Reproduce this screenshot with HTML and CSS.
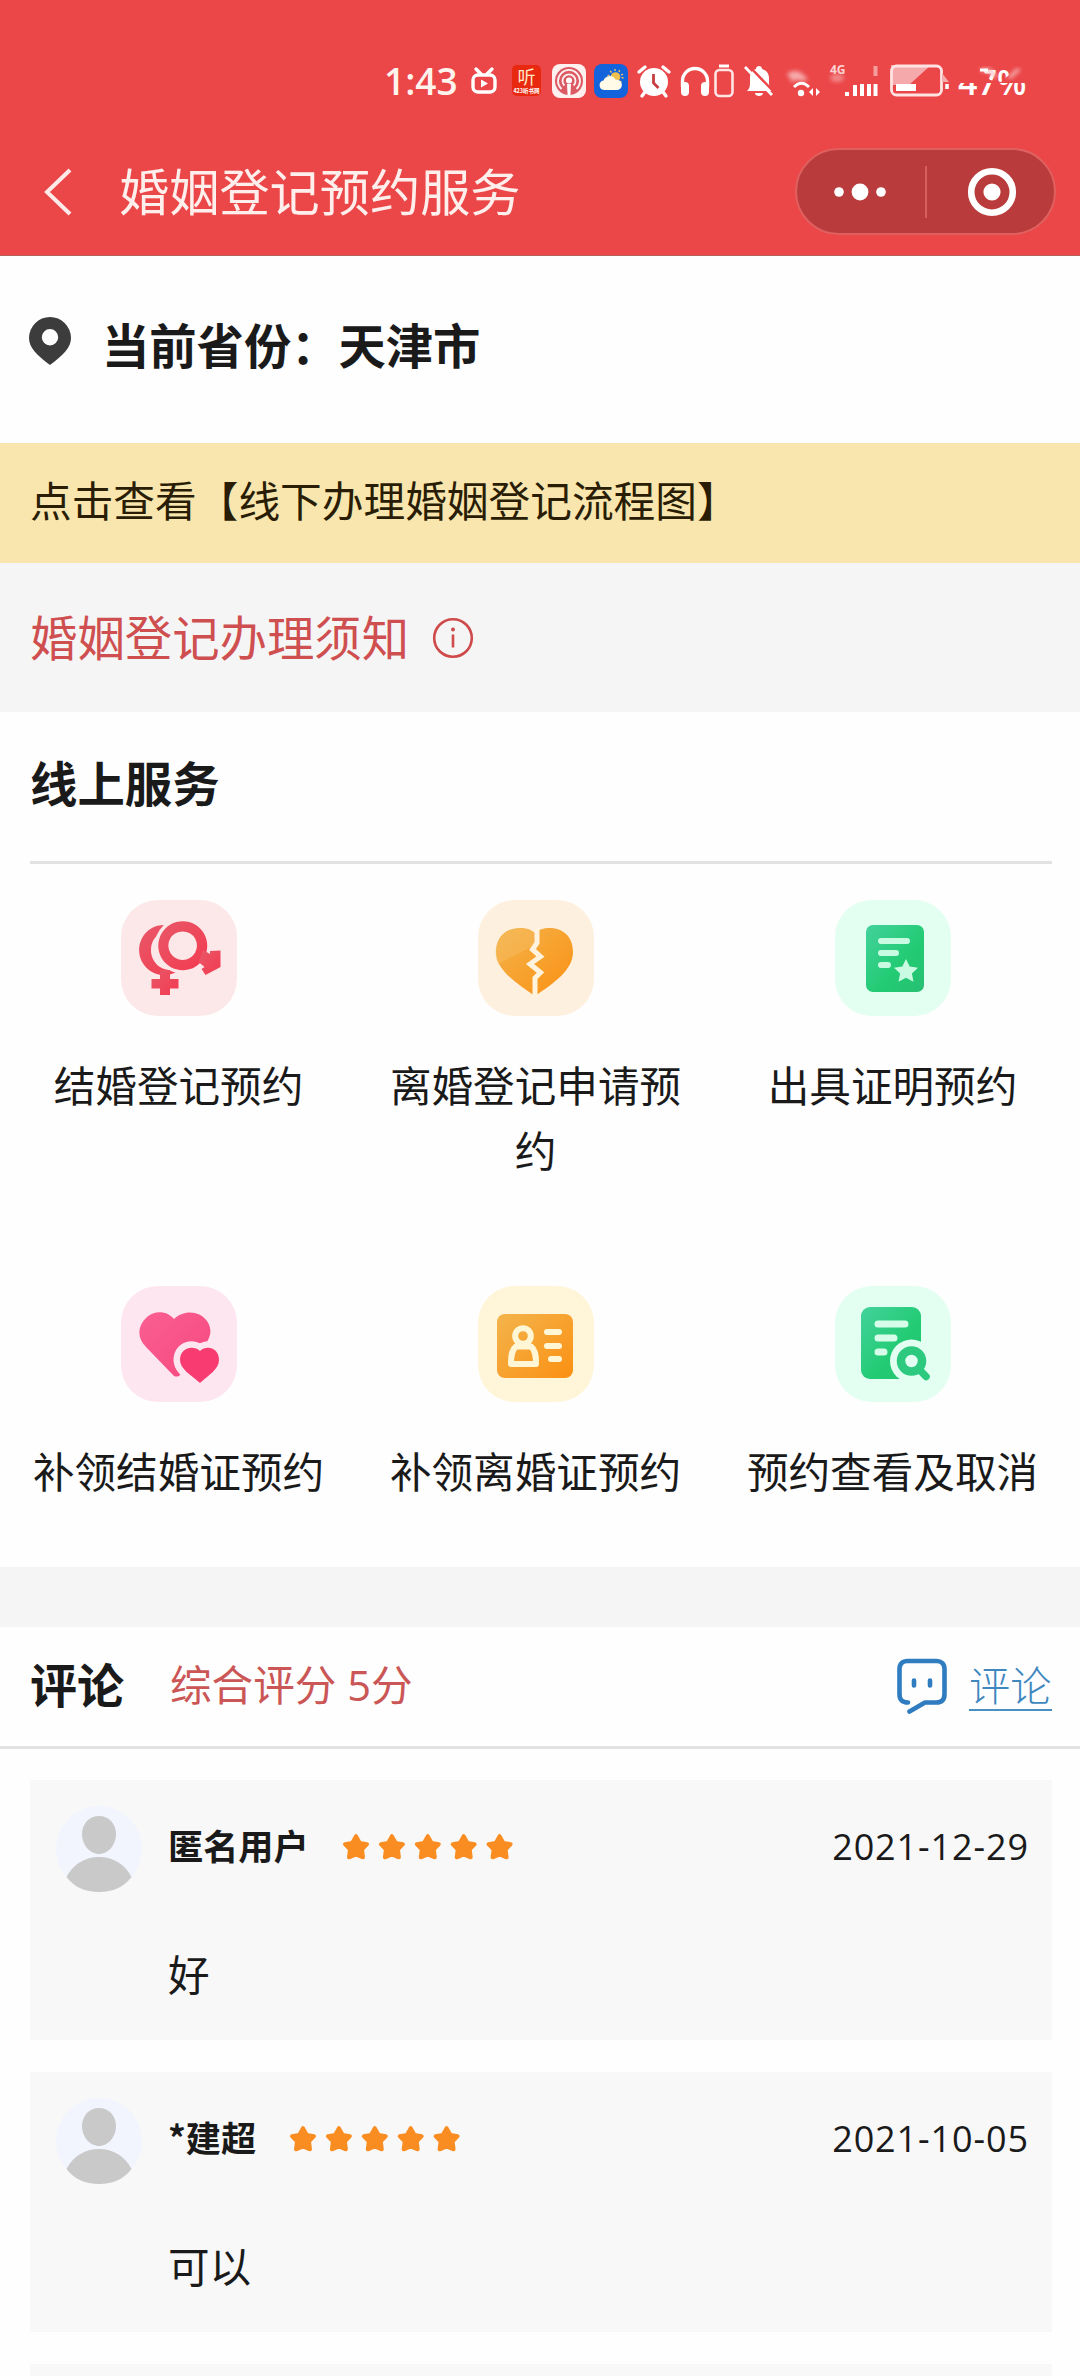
FILE: index.html
```html
<!DOCTYPE html>
<html lang="zh-CN">
<head>
<meta charset="utf-8">
<title>婚姻登记预约服务</title>
<link rel="stylesheet" href="styles.css">
</head>
<body>
<svg class="defs" width="0" height="0" aria-hidden="true">
  <defs>
    <linearGradient id="gRed" x1="0" y1="0" x2="1" y2="1"><stop offset="0" stop-color="#e85868"/><stop offset="1" stop-color="#f33a50"/></linearGradient>
    <linearGradient id="gOrange" x1="0" y1="0" x2="1" y2="1"><stop offset="0" stop-color="#f3b44c"/><stop offset="1" stop-color="#fb9012"/></linearGradient>
    <linearGradient id="gGreen" x1="0" y1="0" x2="1" y2="1"><stop offset="0" stop-color="#43d29c"/><stop offset=".6" stop-color="#22cb73"/><stop offset="1" stop-color="#27bf72"/></linearGradient>
    <linearGradient id="gPink" x1="0" y1="0" x2="1" y2="1"><stop offset="0" stop-color="#fa5f92"/><stop offset="1" stop-color="#f64880"/></linearGradient>
    <path id="star" d="M14 3.200 17.800 10 25 11.200 20 16.500 21 24.300 14 21.300 7 24.300 8 16.500 3 11.200 10.200 10Z" fill="#fa8d22" stroke="#fa8d22" stroke-width="4" stroke-linejoin="round"/>
    <g id="person">
      <circle cx="43" cy="43" r="43" fill="#f2f5fe"/>
      <path d="M43 10c10 0 17 8 17 18 0 11-8 20-17 20s-17-9-17-20c0-10 7-18 17-18Z" fill="#c9c9c9"/>
      <path d="M10.500 71C17 58 29 51 43 51s26 7 32.500 20C68 81 57 86 43 86S18 81 10.500 71Z" fill="#c9c9c9"/>
    </g>
  </defs>
</svg>

<header class="top">
  <div class="status">
    <span class="clock">1:43</span>
    <svg class="st-tv" width="26" height="28" viewBox="0 0 26 28" fill="none" stroke="#fff" stroke-width="3.400" stroke-linecap="round"><path d="M5 2l5 5M21 2l-5 5"/><rect x="2" y="8" width="22" height="17" rx="5"/><path d="M10 12.500v8l7-4z" fill="#fff" stroke="none"/></svg>
    <svg class="st-ting" width="29" height="31" viewBox="0 0 29 31"><rect width="29" height="31" rx="5" fill="#e8280f"/><text x="14.500" y="19" class="ting-big">听</text><text x="14.500" y="28" class="ting-small">423听书网</text></svg>
    <svg class="st-pod" width="34" height="34" viewBox="0 0 34 34" fill="none"><rect width="34" height="34" rx="8" fill="#fff0f0"/><circle cx="17" cy="17" r="14" fill="#dc5a64"/><path d="M9.500 25a11 11 0 1 1 15 0M12.500 21.500a6.500 6.500 0 1 1 9 0" stroke="#fff0f0" stroke-width="1.800"/><circle cx="17" cy="16.500" r="3" fill="#fff"/><path d="M15 20h4l-.6 11h-2.800z" fill="#fff"/></svg>
    <svg class="st-weather" width="34" height="34" viewBox="0 0 34 34"><rect width="34" height="34" rx="8" fill="#1263dc"/><circle cx="21.500" cy="13" r="7" fill="none" stroke="#e9c569" stroke-width="2" stroke-dasharray="1.500 3"/><circle cx="21.500" cy="13" r="4.800" fill="#f1c04f"/><path d="M10 26a4.800 4.800 0 0 1-.5-9.500 6.500 6.500 0 0 1 12-.7A5.200 5.200 0 1 1 22 26z" fill="#fffbe8"/></svg>
    <svg class="st-alarm" width="34" height="32" viewBox="0 0 34 32"><circle cx="17" cy="17" r="14" fill="#fff"/><path d="M2 7l6-5M32 7l-6-5M8 27l-3 4M26 27l3 4" stroke="#fff" stroke-width="3.400" stroke-linecap="round"/><path d="M16.500 9v9l5 5" fill="none" stroke="#c73d40" stroke-width="2.800"/></svg>
    <svg class="st-head" width="30" height="32" viewBox="0 0 30 32"><path d="M2.500 22v-6a12.500 12.500 0 0 1 25 0v6" fill="none" stroke="#fff" stroke-width="3.400"/><rect x="1" y="17" width="8" height="14" rx="4" fill="#fff"/><rect x="21" y="17" width="8" height="14" rx="4" fill="#fff"/></svg>
    <svg class="st-cell" width="20" height="34" viewBox="0 0 20 34"><path d="M5 2h10" stroke="#fff" stroke-width="3"/><rect x="1.500" y="6" width="17" height="26" rx="4" fill="none" stroke="#ffe4e4" stroke-width="2.600"/></svg>
    <svg class="st-bell" width="30" height="32" viewBox="0 0 30 32"><path d="M3 26c2-2 3-4 3-8v-5c0-5 2-8 6-9 0-4 6-4 6 0 4 1 7 4 7 9v5c0 4 1 6 3 8z" fill="#fff"/><path d="M11 28h8c0 4-8 4-8 0z" fill="#fff"/><path d="M4 0l27 28" stroke="#eb4648" stroke-width="2.500"/><path d="M1 2l27 28" stroke="#fff" stroke-width="2.800"/></svg>
    <svg class="st-right" width="250" height="40" viewBox="785 60 250 40">
      <defs><filter id="soft" x="-30%" y="-30%" width="160%" height="160%"><feGaussianBlur stdDeviation="2"/></filter></defs>
      <path d="M786 73c6-6 16-3 21 6l-7 1c-3-2-8-1-8 2z" fill="#f6aaaa" filter="url(#soft)"/>
      <path d="M793 86c5-5 10-5 15 0" fill="none" stroke="#fff" stroke-width="3"/><circle cx="800" cy="92" r="3.200" fill="#fff"/><path d="M812 87v8l-4-4zM815 87v8l4-4z" fill="#fff"/>
      <text x="829" y="73" class="net">4G</text><ellipse cx="836" cy="77" rx="7" ry="4" fill="#f49a9a" opacity=".8" filter="url(#soft)"/>
      <path d="M846 91v4M854 84v11M861 83v12M868 83v12M874.500 83v12" stroke="#fff" stroke-width="4"/><path d="M872.500 65h4v10h-4z" fill="#f7b3b3" opacity=".8"/>
      <path d="M890 64h40l-22 20h-18z" fill="#f6a9aa"/><rect x="890.500" y="65" width="50" height="29" rx="5" fill="none" stroke="#ffe3e3" stroke-width="2.800"/><rect x="895" y="83" width="20" height="7" fill="#fff"/><path d="M946 83v5" stroke="#fff" stroke-width="3.500"/><path d="M941 72l7 9h-7z" fill="#f6a9aa"/>
      <text x="957" y="93.500" class="pct">47%</text>
      <path d="M955 61h23l5 10 6 8 11 2 9-8 12-12 12 5-5 16h-73z" fill="#eb4648"/><path d="M980 69h8l7 7M1018 68l-10 9" fill="none" stroke="#f8b9b9" stroke-width="3.500" filter="url(#soft)"/><path d="M979 69h8" stroke="#fff" stroke-width="3"/>
    </svg>
  </div>
  <div class="nav">
    <svg class="back" width="28" height="48" viewBox="0 0 28 48"><path d="M26 2 3 24l23 22" fill="none" stroke="#ffeaea" stroke-width="4"/></svg>
    <h1>婚姻登记预约服务</h1>
    <div class="capsule">
      <svg width="44" height="18" viewBox="0 0 44 18" fill="#fff"><circle cx="5" cy="9" r="4.800"/><circle cx="26" cy="9" r="8.400"/><circle cx="47" cy="9" r="4.800"/></svg>
      <i class="split"></i>
      <svg width="50" height="50" viewBox="0 0 50 50"><circle cx="25" cy="25" r="20.800" fill="none" stroke="#fff" stroke-width="6.600"/><circle cx="25" cy="25" r="8.600" fill="#fff"/></svg>
    </div>
  </div>
</header>

<section class="province">
  <svg width="42" height="48" viewBox="0 0 42 48"><path fill-rule="evenodd" fill="#3c3c3c" d="M21 0a21 21 0 0 1 21 21c0 10-8 17-21 27C8 38 0 31 0 21A21 21 0 0 1 21 0Zm0 12a8.200 8.200 0 1 0 0 16.400A8.200 8.200 0 0 0 21 12Z"/></svg>
  <span>当前省份：天津市</span>
</section>
<section class="flow">点击查看【线下办理婚姻登记流程图】</section>
<section class="notice">
  <span>婚姻登记办理须知</span>
  <svg width="42" height="42" viewBox="0 0 42 42" stroke="#cf4a4b" fill="none"><circle cx="21" cy="21" r="18.800" stroke-width="2.600"/><path d="M21 17.500v13" stroke-width="2.600"/><circle cx="21" cy="12.500" r="2" fill="#cf4a4b" stroke="none"/></svg>
</section>

<section class="online">
  <h2>线上服务</h2>
  <div class="grid">
    <div class="item">
      <svg class="tile red" viewBox="0 0 116 116">
        <mask id="mRing"><rect width="116" height="116" fill="#fff"/><circle cx="61.700" cy="45.700" r="28" fill="#000"/></mask>
        <g fill="url(#gRed)"><path mask="url(#mRing)" fill-rule="evenodd" d="M43 25a25 25 0 1 0 .1 0ZM49 30a19 20 0 1 1-.1 0Z"/><path d="M39 70h10v9h8.500v9.500H49V95H39v-6.500h-8.500V79H39z"/><path fill-rule="evenodd" d="M61.700 21.200a24.500 24.500 0 1 0 .1 0Zm0 10.200a14.300 14.300 0 1 1-.1 0Z"/><path d="M82 50l7 4v-3l10.500-.5V67L84.500 75 80.500 69l3-2-6-5z"/></g>
      </svg>
      <span>结婚登记预约</span>
    </div>
    <div class="item">
      <svg class="tile orange" viewBox="0 0 116 116">
        <path d="M57 33C48 24 18 25 18 52c0 18 20 31 39 44 19-13 38-26 38-44 0-27-29-28-38-19Z" fill="url(#gOrange)"/><path d="M29 32c10-6 20-5 28 1v12L20 64c-6-16 0-27 9-32Z" fill="#f8c069" opacity=".4"/>
        <path d="M59 26v17l-4.500 6.500 8 7L52 64l10.500 8.500L57 78v19" fill="none" stroke="#fff3de" stroke-width="5"/>
      </svg>
      <span>离婚登记申请预约</span>
    </div>
    <div class="item">
      <svg class="tile green" viewBox="0 0 116 116">
        <rect x="31" y="25" width="58" height="67" rx="7" fill="url(#gGreen)"/>
        <path d="M46 41h26M46 53h15M46 65h7" stroke="#c8fbe2" stroke-width="6" stroke-linecap="round"/>
        <path d="M71 59l3.700 7.600 8.300 1.100-6.100 5.700 1.600 8.300L71 77.700l-7.500 4 1.600-8.300-6.100-5.700 8.300-1.100z" fill="#c8fbe2"/>
      </svg>
      <span>出具证明预约</span>
    </div>
    <div class="item">
      <svg class="tile pink" viewBox="0 0 116 116">
        <path d="M53 33C45 24 33 25 26 31c-10 9-10 21-1 30l27 28c2 2 5 2 7 0l22-26c9-11 11-19 5-28-8-11-24-11-33-2Z" fill="url(#gPink)"/>
        <path d="M79 65c-6-6-20-4-20 9 0 9 11 15 20 23 9-8 19-14 19-23 0-13-13-15-19-9Z" fill="#f83c72" stroke="#fde6ef" stroke-width="13"/><path d="M79 65c-6-6-20-4-20 9 0 9 11 15 20 23 9-8 19-14 19-23 0-13-13-15-19-9Z" fill="#f83c72"/>
      </svg>
      <span>补领结婚证预约</span>
    </div>
    <div class="item">
      <svg class="tile yellow" viewBox="0 0 116 116">
        <rect x="19" y="28" width="76" height="64" rx="8" fill="url(#gOrange)"/>
        <g fill="none" stroke="#fff6d5" stroke-width="6" stroke-linejoin="round" stroke-linecap="round"><circle cx="45" cy="50" r="7.800"/><path d="M38 60.500c-4 3-5 8-5 17.500h25c0-9.500-1-14.500-5-17.500z"/><path d="M69 46h12M69 60h12M73 73h8"/></g>
      </svg>
      <span>补领离婚证预约</span>
    </div>
    <div class="item">
      <svg class="tile green" viewBox="0 0 116 116">
        <rect x="26" y="21" width="60" height="72" rx="9" fill="url(#gGreen)"/>
        <path d="M43 38h27M43 52h16M43 66h6" stroke="#d5fdea" stroke-width="7" stroke-linecap="round"/>
        <circle cx="76.500" cy="75" r="21.500" fill="#e2fff1"/><path d="M76 75l15 15.500" stroke="#2cc97e" stroke-width="7.500" stroke-linecap="round"/><circle cx="76.500" cy="75" r="10.500" fill="#e2fff1" stroke="#2cc97e" stroke-width="8.500"/>
      </svg>
      <span>预约查看及取消</span>
    </div>
  </div>
</section>

<section class="comments">
  <div class="comments-head">
    <h2>评论</h2>
    <span class="score">综合评分 5分</span>
    <svg width="50" height="56" viewBox="0 0 50 56" fill="none" stroke="#2f7cc0" stroke-width="4.600" stroke-linecap="round" stroke-linejoin="round"><path d="M11 44.500C5 44.500 2.500 42 2.500 36V11c0-5 3-8 8-8h29c5 0 8 3 8 8v25c0 6-3 8.500-8 8.500H28L12.500 53.500"/><path d="M17 22.500v5M33 22.500v5"/></svg>
    <a class="write">评论</a>
  </div>
  <div class="list">
    <article class="card">
      <svg class="avatar" viewBox="0 0 86 86"><use href="#person"/></svg>
      <div class="body">
        <div class="meta"><b>匿名用户</b><svg class="stars" width="173" height="28" viewBox="0 0 173 28"><use href="#star"/><use href="#star" x="35.900"/><use href="#star" x="71.800"/><use href="#star" x="107.700"/><use href="#star" x="143.600"/></svg><time>2021-12-29</time></div>
        <p>好</p>
      </div>
    </article>
    <article class="card">
      <svg class="avatar" viewBox="0 0 86 86"><use href="#person"/></svg>
      <div class="body">
        <div class="meta"><b>*建超</b><svg class="stars" width="173" height="28" viewBox="0 0 173 28"><use href="#star"/><use href="#star" x="35.900"/><use href="#star" x="71.800"/><use href="#star" x="107.700"/><use href="#star" x="143.600"/></svg><time>2021-10-05</time></div>
        <p>可以</p>
      </div>
    </article>
    <article class="card next"></article>
  </div>
</section>
</body>
</html>
```
FILE: styles.css
```css
* { box-sizing: border-box; margin: 0; padding: 0; }
html, body { width: 1080px; height: 2376px; overflow: hidden; }
body { background: #fefefe; color: #1a1a1a; font-family: "Open Sans", "Noto Sans CJK SC", sans-serif; font-size: 41.6px; display: flex; flex-direction: column; }
body > * { flex: none; }
svg { display: block; flex: none; }
.defs { position: absolute; }
h1, h2 { white-space: nowrap; }

.top { height: 256px; background: #eb4648; color: #fff; border-bottom: 1px solid #b8605c; }
.status { height: 128px; padding: 33px 0 0 384px; display: flex; align-items: center; }
.status svg { overflow: visible; }
.clock { width: 87px; font-size: 37px; font-weight: 600; line-height: 40px; color: #fff3ee; }
.st-ting { margin-left: 15px; }
.st-pod { margin-left: 11px; }
.st-weather { margin-left: 8px; }
.st-alarm { margin-left: 9px; }
.st-head { margin-left: 9px; }
.st-cell { margin-left: 4px; }
.st-bell { margin-left: 10px; }
.st-right { margin-left: 12px; }
.ting-big { font: 18px "Noto Sans CJK SC", sans-serif; fill: #ffe9c8; text-anchor: middle; }
.ting-small { font: bold 5.5px "Noto Sans CJK SC", sans-serif; fill: #fff; text-anchor: middle; }
.net { font: bold 12px "Open Sans", sans-serif; fill: #fbd5d5; }
.pct { font: 600 34px "Open Sans", sans-serif; fill: #fff; }
.nav { height: 127px; padding: 0 24px 0 44px; display: flex; align-items: center; }
.nav h1 { margin-left: 47px; font-size: 50.2px; font-weight: 400; line-height: 60px; color: #ffefec; }
.capsule { margin-left: auto; width: 261px; height: 87px; border: 2px solid #e0605f; border-radius: 44px; background: #b93b3c; display: flex; align-items: center; padding-left: 37px; }
.capsule svg { overflow: visible; }
.split { width: 2px; height: 52px; margin: 0 40px 0 47px; background: #d3605f; }

.province { height: 187px; padding: 0 29px; display: flex; align-items: center; gap: 31px; font-size: 47.3px; font-weight: 700; line-height: 60px; }
.province svg { margin-top: -18px; }
.province span { margin-top: -8px; }
.flow { height: 120px; padding-left: 30px; background: #f9e6ae; color: #2a1d05; font-size: 41.7px; line-height: 115px; white-space: nowrap; }
.notice { height: 149px; padding: 0 30px; background: #f5f5f5; color: #cf4f50; font-size: 47.4px; display: flex; align-items: center; gap: 23px; line-height: 149px; }

.online { height: 855px; }
.online h2 { height: 152px; margin: 0 28px 0 30px; border-bottom: 3px solid #e2e2e2; font-size: 47.4px; line-height: 144px; }
.grid { width: 1071px; padding-top: 36px; display: grid; grid-template-columns: repeat(3, 357px); grid-auto-rows: 386px; }
.item { display: flex; flex-direction: column; align-items: center; }
.item span { width: 296px; margin-top: 38px; text-align: center; line-height: 65px; word-break: break-all; }
.tile { width: 116px; height: 116px; border-radius: 37px; }
.red { background: #fde8e9; }
.orange { background: #fef0de; }
.green { background: #e2fff1; }
.pink { background: #fde6ef; }
.yellow { background: #fff6d9; }

.comments { border-top: 60px solid #f5f5f5; }
.comments-head { height: 122px; padding: 0 28px 4px 30px; border-bottom: 3px solid #e2e2e2; display: flex; align-items: center; }
.comments-head h2 { width: 140px; font-size: 47px; line-height: 60px; }
.score { color: #cb5656; line-height: 60px; }
.comments-head svg { margin-left: auto; margin-right: 22px; margin-top: 3px; }
.write { width: 83px; color: #3f88bf; font-size: 41.3px; font-weight: 300; line-height: 47px; white-space: nowrap; border-bottom: 2px solid #4a8fc2; margin-top: 3px; }
.list { padding: 31px 28px 0 30px; display: flex; flex-direction: column; gap: 32px; }
.card { height: 260px; background: #f8f8f8; display: flex; padding: 26px 23px 0 26px; }
.card.next { height: 12px; padding: 0; }
.avatar { width: 86px; height: 86px; }
.body { flex: 1; margin-left: 26px; }
.meta { height: 80px; display: flex; align-items: center; }
.meta b { font-family: "Noto Sans CJK SC", sans-serif; font-size: 35.2px; line-height: 50px; margin-top: -2px; }
.stars { margin: 2px 0 0 33px; }
.meta time { margin-left: auto; font-size: 36px; letter-spacing: .9px; }
.body p { margin-top: 59px; line-height: 60px; }
```
